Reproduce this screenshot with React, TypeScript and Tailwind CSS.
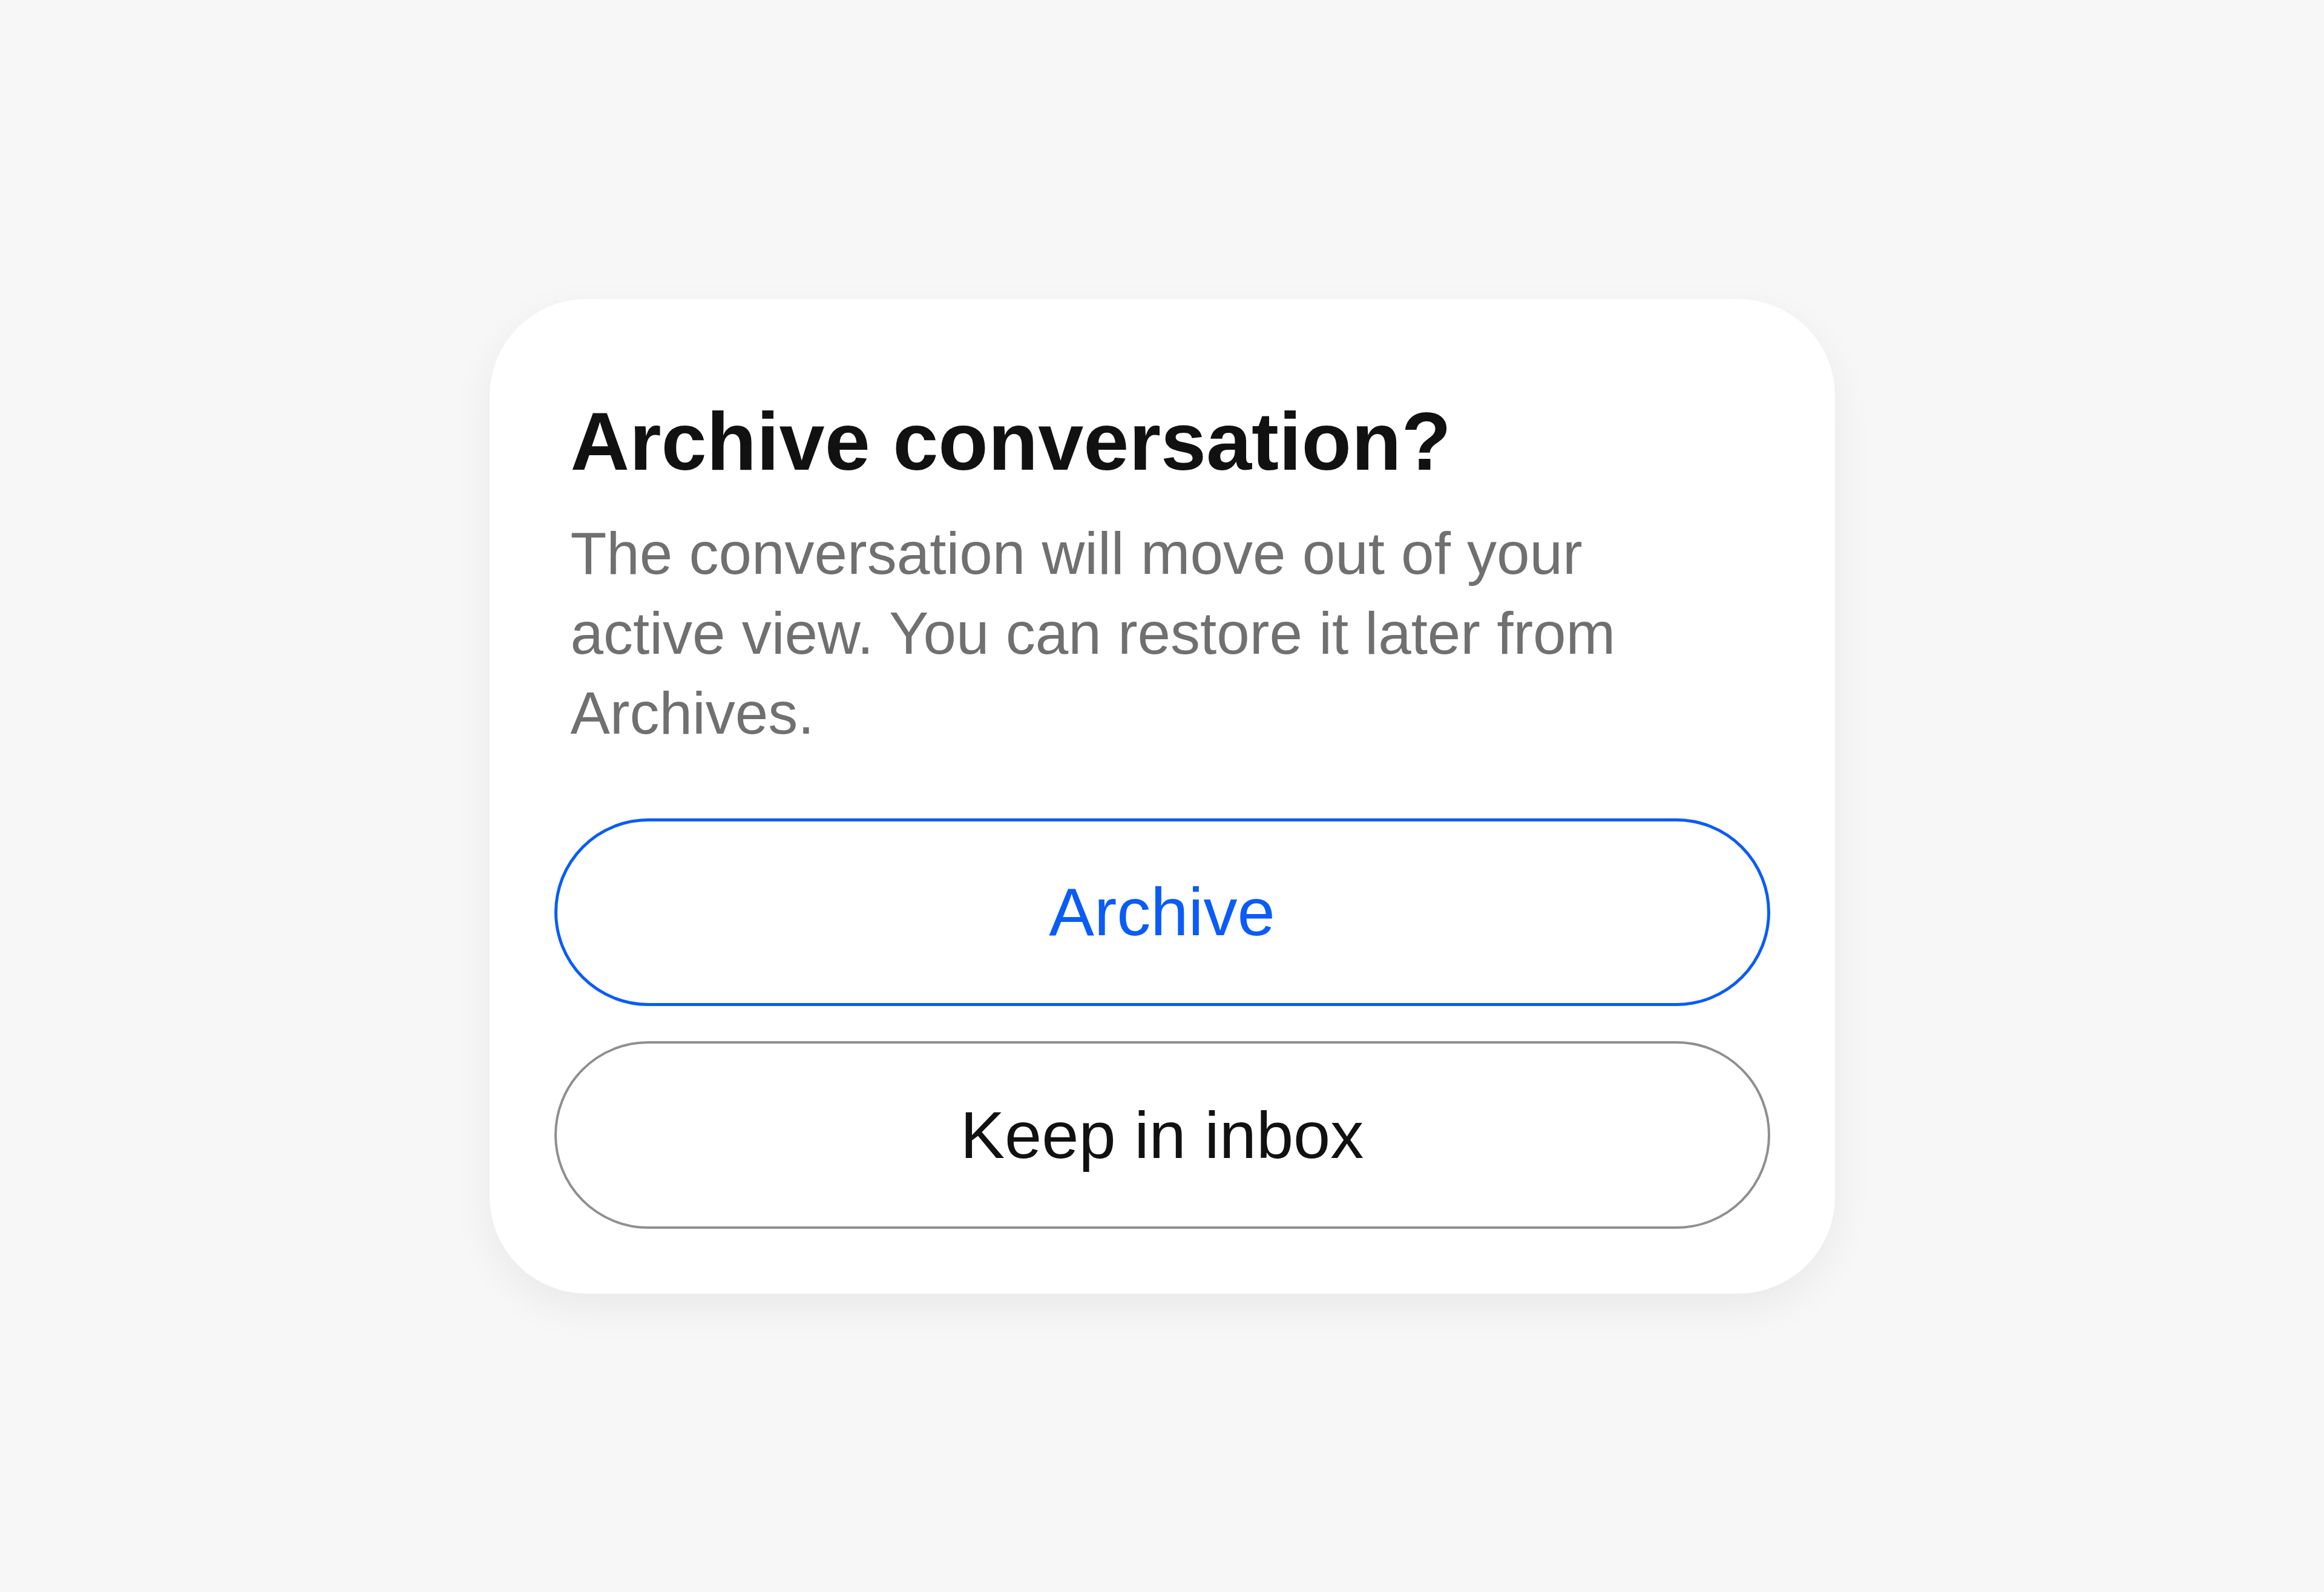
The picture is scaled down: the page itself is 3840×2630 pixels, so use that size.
import React from 'react';

const font = "font-['Liberation_Sans',Arial,sans-serif]";

export default function App() {
  return (
    <div className={`min-h-screen w-full bg-[#f7f7f7] flex items-center justify-center ${font}`}>
      <section
        role="dialog"
        aria-labelledby="archive-title"
        className="w-[2223px] bg-white rounded-[160px] px-[107px] pt-[158px] pb-[107px] shadow-[0_24px_70px_rgba(0,0,0,0.06)]"
      >
        <div className="px-[27px]">
          <h2
            id="archive-title"
            className="text-[135px] leading-[155px] font-bold text-[#111111]"
          >
            Archive conversation?
          </h2>
          <p className="mt-[41px] w-[1880px] text-[98px] leading-[132px] text-[#707070]">
            The conversation will move out of your active view. You can restore it later from Archives.
          </p>
        </div>

        <div className="mt-[108px] flex flex-col gap-[58px]">
          <button
            type="button"
            className="h-[310px] w-full rounded-full border-[5px] border-[#0a5cf8] bg-white text-[112px] text-[#0a5cf8]"
          >
            Archive
          </button>
          <button
            type="button"
            className="h-[310px] w-full rounded-full border-[4px] border-[#8f8f8f] bg-white text-[110px] text-[#111111]"
          >
            Keep in inbox
          </button>
        </div>
      </section>
    </div>
  );
}
